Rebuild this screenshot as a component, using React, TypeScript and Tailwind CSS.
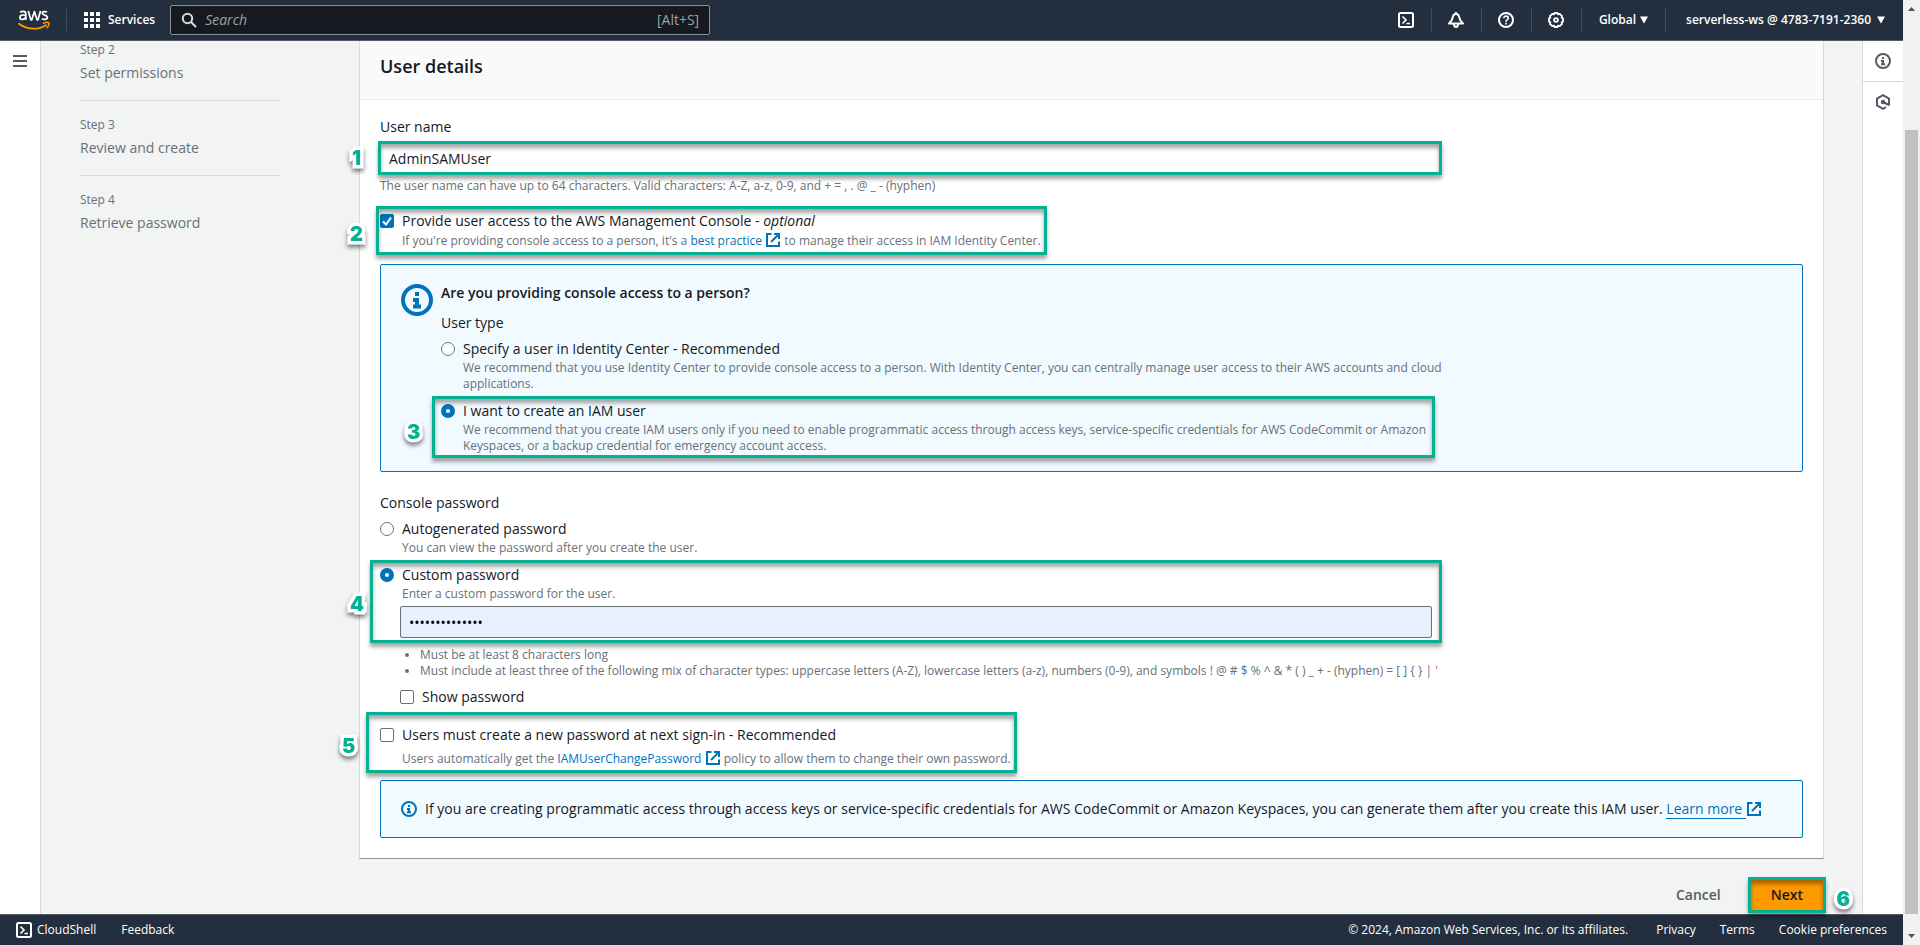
import type { ReactNode } from "react";

const steps = [
  { step: "Step 2", title: "Set permissions" },
  { step: "Step 3", title: "Review and create" },
  { step: "Step 4", title: "Retrieve password" },
];

function Caret() {
  return (
    <svg viewBox="0 0 8 8" className="size-2" fill="currentColor" aria-hidden="true">
      <path d="M0 0.5h8L4 7.5z" />
    </svg>
  );
}

function AwsLogo() {
  return (
    <svg viewBox="0 0 32 21" className="h-[21px] w-8" aria-label="AWS">
      <g fill="none" stroke="#fff" strokeWidth="1.7">
        <path d="M2 2.300c1-.6 2-.9 3.100-.9 1.900 0 2.700.9 2.700 2.500v4c0 .9.200 1.300.6 1.900" />
        <path d="M7.800 5.300c-2.800-.6-5.900-.5-5.900 2.100 0 2.600 4.500 2.900 5.900-.2" />
        <path d="M10.300 1l2.500 8.800h1L16.400 1.500 19 9.800h1L22.500 1" strokeLinejoin="round" />
        <path d="M29 2c-1-.5-4.700-1-4.700 1.100 0 2.600 5.100 1.500 5.100 4.200 0 2.500-3.800 2.500-5.500 1.500" />
      </g>
      <path d="M1 13.800c7.500 5.700 18.500 6.700 27 1.400" fill="none" stroke="#f90" strokeWidth="1.800" strokeLinecap="round" />
      <path d="M25.500 13.300c2-1 4.500-1.100 5.300-.5.500.9-.2 3.600-1.800 5" fill="none" stroke="#f90" strokeWidth="1.500" strokeLinecap="round" />
    </svg>
  );
}

function ShellIcon() {
  return (
    <svg viewBox="0 0 16 16" className="size-4" fill="none" stroke="currentColor" strokeWidth="2" aria-hidden="true">
      <rect x="1" y="1" width="14" height="14" rx="1.500" />
      <path d="M4.500 4.500L8 8l-3.500 3.500M8.500 11.500H12" strokeWidth="1.600" />
    </svg>
  );
}

function BellIcon() {
  return (
    <svg viewBox="0 0 16 16" className="size-4" fill="none" stroke="currentColor" strokeWidth="2" strokeLinejoin="round" aria-hidden="true">
      <path d="M1 11.500h14c-2.600-2.500-3.300-3.700-3.600-5.700C11.100 3.300 10 2 8 2S4.900 3.300 4.600 5.800c-.3 2-1 3.200-3.600 5.700z" />
      <path d="M8 2V0M6 12c0 4 4 4 4 0" />
    </svg>
  );
}

function HelpIcon() {
  return (
    <svg viewBox="0 0 16 16" className="size-4" fill="none" stroke="currentColor" strokeWidth="2" aria-hidden="true">
      <circle cx="8" cy="8" r="7" />
      <path d="M5.800 6.300c0-3 4.500-2.700 4.500-.2C10.300 7.800 8 7.700 8 9.800M8 10.800v1.700" strokeWidth="1.600" />
    </svg>
  );
}

function GearIcon() {
  return (
    <svg viewBox="0 0 16 16" className="size-4" fill="none" stroke="currentColor" strokeWidth="1.800" strokeLinejoin="round" aria-hidden="true">
      <path d="M6.600 1h2.800l.6 1.300 1.700-.5 2.400 2.300-.5 1.600 1.400.9v2.800l-1.400.9.5 1.600-2.400 2.300-1.700-.5-.6 1.300H6.600L6 13.700l-1.700.5-2.400-2.300.5-1.600L1 9.400V6.600l1.400-.9-.5-1.600 2.400-2.300 1.700.5z" />
      <circle cx="8" cy="8" r="1.900" />
    </svg>
  );
}

function InfoIcon({ className }: { className: string }) {
  return (
    <svg viewBox="0 0 16 16" className={className} fill="none" stroke="currentColor" strokeWidth="2" aria-hidden="true">
      <circle cx="8" cy="8" r="7" />
      <path d="M8 4v2M6 8h2v3M6 11.200h4" />
    </svg>
  );
}

function HexIcon() {
  return (
    <svg viewBox="0 0 16 16" className="size-4" fill="none" stroke="currentColor" strokeWidth="2" aria-hidden="true">
      <path d="M14 11.500V4.600L8 1.200 2 4.600v6.800l6 3.400 3-1.700" />
      <circle cx="8" cy="8" r="1.200" fill="currentColor" />
      <path d="M8 8l6 3" />
    </svg>
  );
}

function ExternalIcon() {
  return (
    <svg viewBox="0 0 16 16" className="inline size-4 align-[-3px] text-[#0073bb]" fill="none" stroke="currentColor" strokeWidth="2" aria-hidden="true">
      <path d="M6.500 2H2v12h12V9.500" />
      <path d="M9 2h5v5M14 2L6 10" />
    </svg>
  );
}

// Green callout frame laid over the control it points at
function Frame({ className }: { className: string }) {
  return (
    <div
      className={`pointer-events-none absolute border-3 border-[#06b193] shadow-[0_4px_4px_rgba(0,0,0,0.35),inset_0_4px_4px_rgba(0,0,0,0.35)] ${className}`}
    />
  );
}

function Marker({ n, className }: { n: number; className: string }) {
  return (
    <span
      className={`pointer-events-none absolute font-[Inter,sans-serif] text-xl leading-6 font-black text-[#06b193] [-webkit-text-stroke:7px_white] [paint-order:stroke_fill] drop-shadow-[0_3px_2px_rgba(0,0,0,0.5)] ${className}`}
    >
      {n}
    </span>
  );
}

function Radio({ id, name, checked }: { id: string; name: string; checked?: boolean }) {
  return (
    <input
      id={id}
      name={name}
      type="radio"
      defaultChecked={checked}
      className="mt-1 size-3.5 shrink-0 appearance-none rounded-full border border-[#687078] bg-white checked:border-[5px] checked:border-[#0073bb]"
    />
  );
}

function Checkbox({ id, checked }: { id: string; checked?: boolean }) {
  return (
    <span className="relative mt-1 size-3.5 shrink-0">
      <input
        id={id}
        type="checkbox"
        defaultChecked={checked}
        className="peer block size-3.5 appearance-none rounded-xs border border-[#687078] bg-white checked:border-[#0073bb] checked:bg-[#0073bb]"
      />
      <svg viewBox="0 0 14 14" className="pointer-events-none absolute inset-0 hidden size-3.5 peer-checked:block" fill="none" stroke="#fff" strokeWidth="2">
        <path d="M3 7.500l3 3 5-7" />
      </svg>
    </span>
  );
}

function Option({ id, control, label, children }: { id: string; control: ReactNode; label: ReactNode; children?: ReactNode }) {
  return (
    <div className="flex gap-2">
      {control}
      <div>
        <label htmlFor={id} className="block">{label}</label>
        {children}
      </div>
    </div>
  );
}

function TopBar() {
  return (
    <header className="flex h-[41px] items-center border-b border-[#545b64] bg-[#232f3e] text-xs font-semibold text-white">
      <a href="#home" className="ml-[18px]"><AwsLogo /></a>
      <div className="ml-4 h-[22px] w-px bg-[#414d5c]" />
      <button className="ml-[17px] flex items-center gap-2">
        <svg viewBox="0 0 16 16" className="size-4" fill="currentColor" aria-hidden="true">
          {[0, 6, 12].map((y) => [0, 6, 12].map((x) => <rect key={`${x}-${y}`} x={x} y={y} width="4" height="4" rx="0.5" />))}
        </svg>
        Services
      </button>
      <div className="ml-[15px] flex h-[30px] w-[540px] items-center rounded-xs border border-[#879596] bg-[#161a20] px-2.5 text-sm font-normal text-[#95a5a6]">
        <svg viewBox="0 0 16 16" className="size-4 text-[#d5dbdb]" fill="none" stroke="currentColor" strokeWidth="2" aria-hidden="true">
          <circle cx="6.500" cy="6.500" r="4.700" />
          <path d="M10 10l5 5" />
        </svg>
        <input aria-label="Search" placeholder="Search" className="ml-2 min-w-0 flex-1 outline-none placeholder:text-[#95a5a6] placeholder:italic" />
        <span>[Alt+S]</span>
      </div>
      <div className="ml-auto flex h-6 items-center divide-x divide-[#414d5c]">
        <button aria-label="CloudShell" className="flex h-6 w-[50px] items-center justify-center"><ShellIcon /></button>
        <button aria-label="Notifications" className="flex h-6 w-[50px] items-center justify-center"><BellIcon /></button>
        <button aria-label="Help" className="flex h-6 w-[50px] items-center justify-center"><HelpIcon /></button>
        <button aria-label="Settings" className="flex h-6 w-[50px] items-center justify-center"><GearIcon /></button>
        <button className="flex h-6 items-center gap-1 px-[17px]">Global <Caret /></button>
        <button className="flex h-6 items-center gap-1.5 pr-[18px] pl-5">serverless-ws @ 4783-7191-2360 <Caret /></button>
      </div>
    </header>
  );
}

function StepNav() {
  return (
    <nav className="ml-[39px] w-[200px] shrink-0 pt-px text-[#687078]">
      <ul className="divide-y divide-[#d5dbdb]">
        {steps.map(({ step, title }) => (
          <li key={step} className="pb-4 not-first:pt-4">
            <p className="text-xs leading-4">{step}</p>
            <p className="mt-1 leading-[22px]">{title}</p>
          </li>
        ))}
      </ul>
    </nav>
  );
}

function UserTypeBox() {
  return (
    <section className="mt-[15px] flex gap-2 rounded-xs border border-[#0073bb] bg-[#f1faff] px-5 py-[17px]">
      <InfoIcon className="mt-0.5 size-8 shrink-0 text-[#0073bb]" />
      <div className="grow">
        <h3 className="font-semibold">Are you providing console access to a person?</h3>
        <fieldset className="mt-2">
          <legend>User type</legend>
          <div className="mt-1 w-3/4 space-y-2">
            <Option id="identity" control={<Radio id="identity" name="type" />} label="Specify a user in Identity Center - Recommended">
              <p className="text-xs leading-4 text-[#687078]">
                We recommend that you use Identity Center to provide console access to a person. With Identity Center, you can centrally manage user access to their AWS accounts and cloud applications.
              </p>
            </Option>
            <div className="relative">
              <Option id="iam" control={<Radio id="iam" name="type" checked />} label="I want to create an IAM user">
                <p className="text-xs leading-4 text-[#687078]">
                  We recommend that you create IAM users only if you need to enable programmatic access through access keys, service-specific credentials for AWS CodeCommit or Amazon Keyspaces, or a backup credential for emergency account access.
                </p>
              </Option>
              <Frame className="-top-1 right-3 -bottom-1 -left-[9px]" />
              <Marker n={3} className="top-5 -left-[34px]" />
            </div>
          </div>
        </fieldset>
      </div>
    </section>
  );
}

function PasswordFields() {
  return (
    <fieldset className="mt-5">
      <legend>Console password</legend>
      <div className="mt-1">
        <Option id="auto" control={<Radio id="auto" name="password" />} label="Autogenerated password">
          <p className="text-xs leading-4 text-[#687078]">You can view the password after you create the user.</p>
        </Option>
      </div>
      <div className="grid grid-cols-12 gap-x-5">
        <div className="relative col-span-9 mt-2">
          <Option id="custom" control={<Radio id="custom" name="password" checked />} label="Custom password">
            <p className="text-xs leading-4 text-[#687078]">Enter a custom password for the user.</p>
          </Option>
          <div className="mt-1 mr-2.5 ml-5">
            <input
              type="password"
              aria-label="Custom password"
              defaultValue="abcdefghijklmn"
              className="block h-8 w-full rounded-xs border border-[#687078] bg-[#e8f0fe] px-2 text-black"
            />
          </div>
          <Frame className="-top-1 right-0 -bottom-[5px] -left-2.5" />
          <Marker n={4} className="top-7 -left-[30px]" />
        </div>
      </div>
      <ul className="mt-[9px] ml-10 list-disc text-xs leading-4 text-[#687078]">
        <li>Must be at least 8 characters long</li>
        <li>{"Must include at least three of the following mix of character types: uppercase letters (A-Z), lowercase letters (a-z), numbers (0-9), and symbols ! @ # $ % ^ & * ( ) _ + - (hyphen) = [ ] { } | '"}</li>
      </ul>
      <div className="mt-[7px] ml-5">
        <Option id="show" control={<Checkbox id="show" />} label="Show password" />
      </div>
    </fieldset>
  );
}

function UserDetails() {
  return (
    <section className="border border-t-0 border-[#d5dbdb] border-b-[#879596] bg-white">
      <div className="border-b border-[#eaeded] bg-[#fafafa] px-5 pt-3 pb-5">
        <h2 className="text-lg leading-[26px] font-semibold">User details</h2>
      </div>
      <div className="px-5 pt-4 pb-5">
        <label htmlFor="username" className="block">User name</label>
        <div className="grid grid-cols-12 gap-x-5">
          <div className="relative col-span-9 mt-1">
            <input id="username" defaultValue="AdminSAMUser" className="block h-8 w-full rounded-xs border border-[#aab7b8] px-2" />
            <Frame className="-top-px right-0 -bottom-px -left-0.5" />
            <Marker n={1} className="top-1 -left-7" />
          </div>
        </div>
        <p className="mt-1 text-xs leading-4 text-[#687078]">The user name can have up to 64 characters. Valid characters: A-Z, a-z, 0-9, and + = , . @ _ - (hyphen)</p>

        <div className="relative mt-4 w-fit">
          <Option id="console" control={<Checkbox id="console" checked />} label={<>Provide user access to the AWS Management Console - <i>optional</i></>}>
            <p className="text-xs leading-4 text-[#687078]">
              If you're providing console access to a person, it's a <a href="#best-practice" className="text-[#0073bb]">best practice <ExternalIcon /></a> to manage their access in IAM Identity Center.
            </p>
          </Option>
          <Frame className="-top-1 -right-1.5 -bottom-1.5 -left-1" />
          <Marker n={2} className="top-3 -left-[30px]" />
        </div>

        <UserTypeBox />
        <PasswordFields />

        <div className="relative mt-4 w-fit">
          <Option id="reset" control={<Checkbox id="reset" />} label="Users must create a new password at next sign-in - Recommended">
            <p className="mt-1 text-xs leading-4 text-[#687078]">
              Users automatically get the <a href="#policy" className="text-[#0073bb]">IAMUserChangePassword <ExternalIcon /></a> policy to allow them to change their own password.
            </p>
          </Option>
          <Frame className="-top-3 -right-1.5 -bottom-1.5 -left-3.5" />
          <Marker n={5} className="top-2.5 -left-[38px]" />
        </div>

        <div className="mt-[13px] flex items-center gap-2 rounded-xs border border-[#0073bb] bg-[#f1faff] px-5 py-[17px]">
          <InfoIcon className="size-4 shrink-0 text-[#0073bb]" />
          <p>
            If you are creating programmatic access through access keys or service-specific credentials for AWS CodeCommit or Amazon Keyspaces, you can generate them after you create this IAM user.{" "}
            <a href="#learn-more" className="text-[#0073bb]"><span className="border-b border-[#0073bb]">Learn more </span><ExternalIcon /></a>
          </p>
        </div>
      </div>
    </section>
  );
}

function Footer() {
  return (
    <footer className="flex h-[31px] items-center border-t border-[#545b64] bg-[#232f3e] px-4 text-xs font-medium text-white">
      <button className="flex items-center gap-[5px]"><ShellIcon /> CloudShell</button>
      <a href="#feedback" className="ml-[25px]">Feedback</a>
      <span className="ml-auto">© 2024, Amazon Web Services, Inc. or its affiliates.</span>
      <a href="#privacy" className="ml-7">Privacy</a>
      <a href="#terms" className="ml-6">Terms</a>
      <a href="#cookies" className="ml-6">Cookie preferences</a>
    </footer>
  );
}

function ScrollBar() {
  return (
    <div className="flex w-[17px] shrink-0 flex-col items-center bg-[#f1f1f1] text-[#505050]" aria-hidden="true">
      <svg viewBox="0 0 17 17" className="size-[17px]" fill="currentColor"><path d="M5 11l3.500-4 3.500 4z" /></svg>
      <div className="mt-[113px] w-[13px] grow bg-[#c1c1c1]" />
      <svg viewBox="0 0 17 17" className="mt-3.5 size-[17px]" fill="currentColor"><path d="M5 6l3.500 4L12 6z" /></svg>
    </div>
  );
}

export default function App() {
  return (
    <div className="flex min-h-screen font-['Open_Sans','Noto_Sans',sans-serif] text-sm leading-[22px] text-[#16191f]">
      <div className="flex min-w-0 grow flex-col">
        <TopBar />
        <div className="flex grow">
          <aside className="w-[41px] shrink-0 border-r border-[#d5dbdb] bg-white pt-[13px] pl-3 text-[#545b64]">
            <button aria-label="Open navigation" className="block">
              <svg viewBox="0 0 16 16" className="size-4" stroke="currentColor" strokeWidth="2" aria-hidden="true">
                <path d="M1 2h14M1 7h14M1 12h14" />
              </svg>
            </button>
          </aside>
          <main className="flex min-w-0 grow bg-[#f2f3f3] pr-[38px]">
            <StepNav />
            <div className="ml-[79px] min-w-0 grow">
              <UserDetails />
              <div className="mt-5 flex items-center justify-end text-sm font-semibold">
                <button className="px-[21px] py-1 text-[#545b64]">Cancel</button>
                <div className="relative ml-2">
                  <button className="block h-8 rounded-xs bg-[#f90] px-[21px]">Next</button>
                  <Frame className="-inset-0.5" />
                  <Marker n={6} className="top-2 -right-[26px]" />
                </div>
              </div>
            </div>
          </main>
          <aside className="w-[41px] shrink-0 border-l border-[#d5dbdb] bg-white text-[#545b64]">
            <button aria-label="Info" className="flex h-[41px] w-full items-center justify-center border-b border-[#d5dbdb]"><InfoIcon className="size-4" /></button>
            <button aria-label="Tutorials" className="flex h-10 w-full items-center justify-center"><HexIcon /></button>
          </aside>
        </div>
        <Footer />
      </div>
      <ScrollBar />
    </div>
  );
}
